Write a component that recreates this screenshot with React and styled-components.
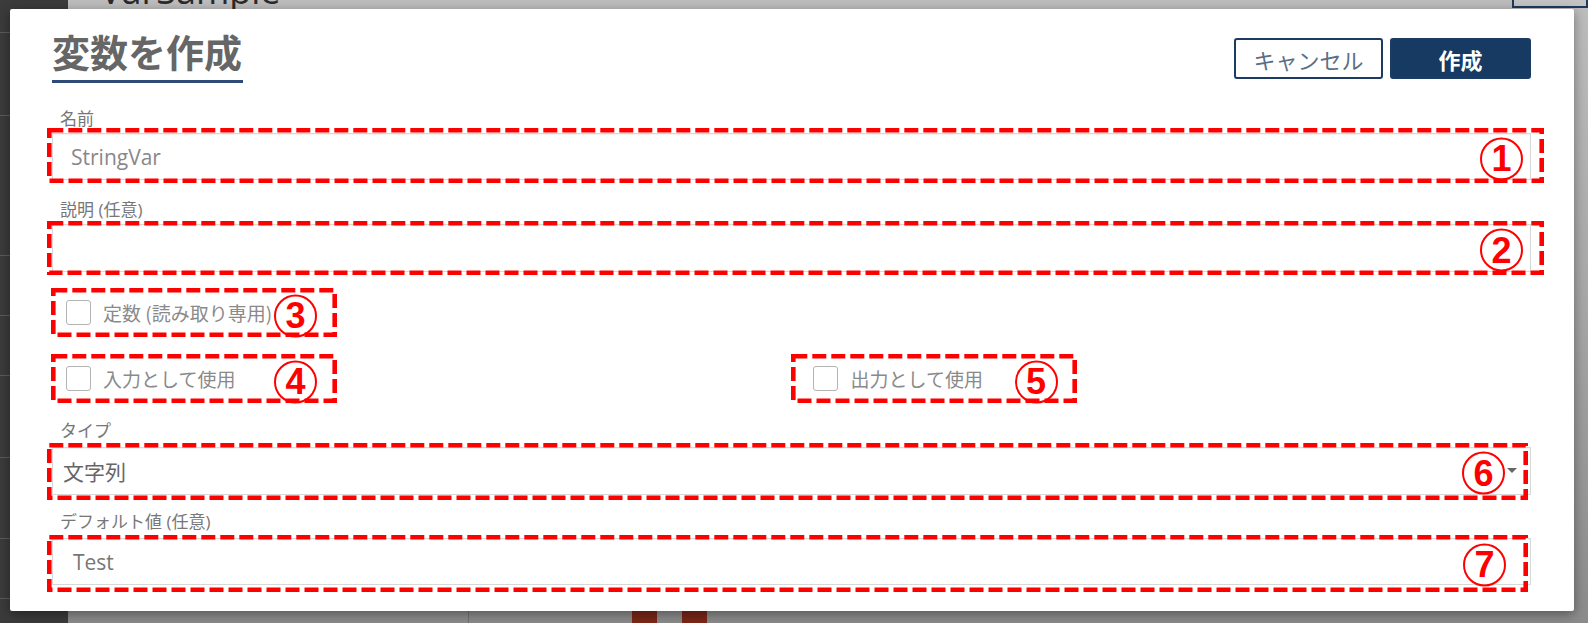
import React from 'react';
import styled, { createGlobalStyle } from 'styled-components';

const GlobalStyle = createGlobalStyle`
  html, body {
    margin: 0;
    padding: 0;
  }
  body {
    font-family: "Open Sans", "Noto Sans CJK JP", sans-serif;
    background: #8a8a8a;
  }
  * {
    box-sizing: border-box;
  }
`;

const Screen = styled.div`
  position: relative;
  width: 1588px;
  height: 623px;
  overflow: hidden;
  display: flex;
`;

/* ---------- app behind the modal ---------- */

const Sidebar = styled.nav`
  width: 68px;
  flex: none;
  background: #3b3b3b;
  display: flex;
  flex-direction: column;
`;

const SideItem = styled.div`
  flex: none;
  height: ${(p) => p.$h}px;
  border-bottom: 1px solid #5c5c5c;
`;

const Backdrop = styled.main`
  flex: 1;
  display: flex;
  flex-direction: column;
  background: linear-gradient(#bdbdbd, #a9a9a9 45%, #8b8b8b);
`;

const BackHeader = styled.header`
  height: 9px;
  flex: none;
  display: flex;
  align-items: flex-start;
  justify-content: space-between;
  padding-left: 32px;
`;

const PageTitle = styled.h1`
  margin: -27px 0 0;
  font-size: 36px;
  line-height: 36px;
  font-weight: 400;
  color: #2a2a2a;
`;

const ToolButton = styled.div`
  width: 76px;
  height: 30px;
  margin-top: -22px;
  border: 2px solid #1d3a5e;
  background: #c4c4c4;
`;

const Workspace = styled.div`
  flex: 1;
  display: flex;
`;

const LeftPane = styled.div`
  width: 401px;
  border-right: 1px solid #707070;
`;

const Designer = styled.div`
  flex: 1;
  display: flex;
  align-items: flex-end;
  gap: 25px;
  padding-left: 163px;
`;

const Activity = styled.div`
  width: 25px;
  height: 14px;
  background: #7a2718;
`;

/* ---------- modal ---------- */

const Dialog = styled.section`
  position: absolute;
  left: 10px;
  top: 9px;
  width: 1564px;
  height: 602px;
  background: #fff;
  border-radius: 2px;
  box-shadow: 0 3px 12px rgba(0, 0, 0, 0.4);
  padding: 22px 43px 0 42px;
  font-family: "Open Sans", "Noto Sans CJK JP", sans-serif;
`;

const DialogHeader = styled.div`
  display: flex;
  justify-content: space-between;
  align-items: flex-start;
`;

const Title = styled.h2`
  margin: 0;
  font-family: "Noto Sans CJK JP", sans-serif;
  font-size: 38px;
  line-height: 40px;
  font-weight: 700;
  color: #666;
  padding: 0 1px 9px 0;
  border-bottom: 3px solid #2d4b78;
`;

const ButtonRow = styled.div`
  display: flex;
  gap: 7px;
  margin-top: 7px;
`;

const Button = styled.button`
  width: ${(p) => p.$w}px;
  height: 41px;
  border: 2px solid #1c3b63;
  border-radius: 3px;
  background: ${(p) => (p.$primary ? '#163a62' : '#fff')};
  color: ${(p) => (p.$primary ? '#fff' : '#5b6f88')};
  font-family: "Noto Sans CJK JP", sans-serif;
  font-size: 22px;
  font-weight: ${(p) => (p.$primary ? 700 : 400)};
  cursor: pointer;
`;

const Form = styled.div`
  margin-top: 26px;
  display: flex;
  flex-direction: column;
`;

const Field = styled.div`
  display: flex;
  flex-direction: column;
  margin-top: ${(p) => p.$mt || 0}px;
`;

const Label = styled.label`
  font-size: 17px;
  line-height: 20px;
  color: #777;
  padding-left: 8px;
  margin-bottom: ${(p) => p.$mb || 4}px;
`;

const Annot = styled.div`
  position: relative;
`;

const TextBox = styled.div`
  position: relative;
  height: ${(p) => p.$h}px;
  border: 1px solid #d8d8d8;
  box-shadow: inset 0 1px 2px rgba(0, 0, 0, 0.06);
  display: flex;
  align-items: center;
  padding-left: ${(p) => p.$pl}px;
  font-size: 21px;
  color: ${(p) => p.$color || '#888'};
`;

const Select = styled(TextBox)`
  &::after {
    content: '';
    position: absolute;
    right: 13px;
    top: 50%;
    margin-top: -3px;
    border-left: 5px solid transparent;
    border-right: 5px solid transparent;
    border-top: 5px solid #666;
  }
`;

const CheckGrid = styled.div`
  display: grid;
  grid-template-columns: 1fr 1fr;
  row-gap: 17px;
  margin-top: 16px;
`;

const CheckItem = styled.label`
  position: relative;
  width: 286px;
  height: 49px;
  display: flex;
  align-items: center;
  gap: ${(p) => p.$gap || 12}px;
  padding-left: ${(p) => p.$pl}px;
  margin-left: -1px;
  grid-column: ${(p) => p.$col};
`;

const CheckBox = styled.span`
  width: 25px;
  height: 25px;
  border: 1.5px solid #b3b3b3;
  border-radius: 3px;
  background: #fff;
  flex: none;
`;

const CheckText = styled.span`
  font-size: 19px;
  color: #8a8a8a;
  font-family: "Noto Sans CJK JP", sans-serif;
`;

/* ---------- red annotation overlay ---------- */

const FrameSvg = styled.svg`
  position: absolute;
  top: ${(p) => p.$i[0]}px;
  left: ${(p) => p.$i[3]}px;
  width: calc(100% - ${(p) => p.$i[1] + p.$i[3]}px);
  height: calc(100% - ${(p) => p.$i[0] + p.$i[2]}px);
  pointer-events: none;
  overflow: visible;
`;

const FrameRect = styled.rect`
  width: calc(100% - 4.6px);
  height: calc(100% - 4.6px);
  fill: none;
  stroke: #ff0000;
  stroke-width: 4.6px;
  stroke-dasharray: 14 5;
`;

const Badge = styled.span`
  position: absolute;
  right: ${(p) => p.$r}px;
  top: 50%;
  transform: translateY(calc(-50% + ${(p) => p.$dy || 2}px));
  width: 43px;
  height: 43px;
  border: 2px solid #ff0000;
  border-radius: 50%;
  display: flex;
  align-items: center;
  justify-content: center;
  font-family: "Liberation Sans", Arial, sans-serif;
  font-size: 36px;
  font-weight: 700;
  line-height: 1;
  color: #ff0000;
`;

const Frame = ({ inset }) => (
  <FrameSvg $i={inset}>
    <FrameRect x="2.3" y="2.3" />
  </FrameSvg>
);

const sideItems = [33, 83, 140, 60, 60, 82, 81, 60];

export default function App() {
  return (
    <>
      <GlobalStyle />
      <Screen>
        <Sidebar>
          {sideItems.map((h, i) => (
            <SideItem key={i} $h={h} />
          ))}
        </Sidebar>
        <Backdrop>
          <BackHeader>
            <PageTitle>VarSample</PageTitle>
            <ToolButton />
          </BackHeader>
          <Workspace>
            <LeftPane />
            <Designer>
              <Activity />
              <Activity />
            </Designer>
          </Workspace>
        </Backdrop>

        <Dialog>
          <DialogHeader>
            <Title>変数を作成</Title>
            <ButtonRow>
              <Button $w={149}>キャンセル</Button>
              <Button $w={141} $primary>作成</Button>
            </ButtonRow>
          </DialogHeader>

          <Form>
            <Field>
              <Label>名前</Label>
              <Annot>
                <TextBox $h={47} $pl={18}>StringVar</TextBox>
                <Frame inset={[-5, -13, -3, -5]} />
                <Badge $r={8}>1</Badge>
              </Annot>
            </Field>

            <Field $mt={20}>
              <Label>説明 (任意)</Label>
              <Annot>
                <TextBox $h={48} $pl={18} />
                <Frame inset={[-3, -13, -3, -5]} />
                <Badge $r={8}>2</Badge>
              </Annot>
            </Field>

            <CheckGrid>
              <CheckItem $pl={15} $col={1}>
                <CheckBox />
                <CheckText>定数 (読み取り専用)</CheckText>
                <Frame inset={[0, 0, 0, 0]} />
                <Badge $r={20} $dy={3}>3</Badge>
              </CheckItem>
              <CheckItem $pl={15} $col={1}>
                <CheckBox />
                <CheckText>入力として使用</CheckText>
                <Frame inset={[0, 0, 0, 0]} />
                <Badge $r={20} $dy={3}>4</Badge>
              </CheckItem>
              <CheckItem $pl={22} $gap={13} $col={2}>
                <CheckBox />
                <CheckText>出力として使用</CheckText>
                <Frame inset={[0, 0, 0, 0]} />
                <Badge $r={19} $dy={3}>5</Badge>
              </CheckItem>
            </CheckGrid>

            <Field $mt={18}>
              <Label $mb={6}>タイプ</Label>
              <Annot>
                <Select $h={48} $pl={10} $color="#666">文字列</Select>
                <Frame inset={[-4, 3, -5, -5]} />
                <Badge $r={26}>6</Badge>
              </Annot>
            </Field>

            <Field $mt={17}>
              <Label $mb={6}>デフォルト値 (任意)</Label>
              <Annot>
                <TextBox $h={47} $pl={20} $color="#777">Test</TextBox>
                <Frame inset={[-3, 3, -7, -5]} />
                <Badge $r={25} $dy={3}>7</Badge>
              </Annot>
            </Field>
          </Form>
        </Dialog>
      </Screen>
    </>
  );
}
